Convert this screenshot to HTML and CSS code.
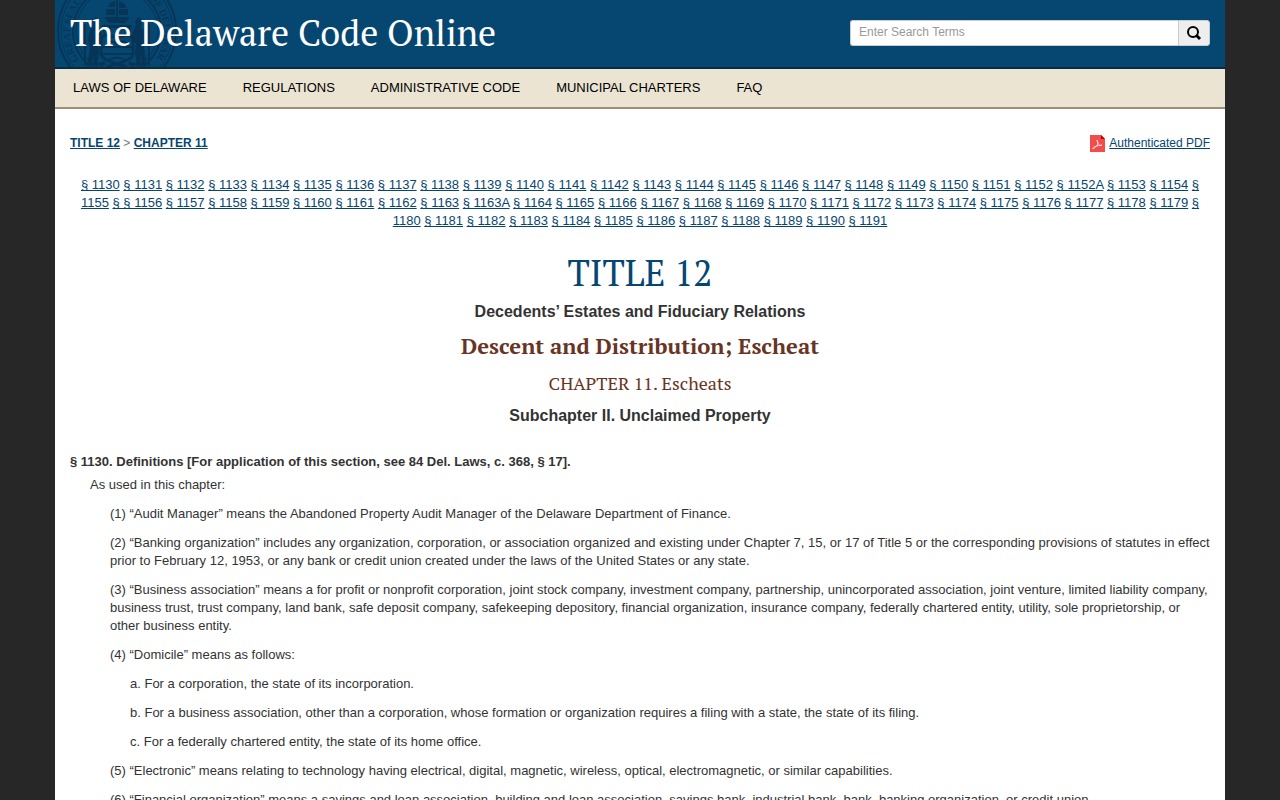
FILE: index.html
```
<!DOCTYPE html>
<html lang="en">
<head>
    <meta charset="UTF-8">
    <meta name="viewport" content="width=device-width, initial-scale=1.0">
    <title>Title 12 - CHAPTER 11. Escheats</title>
    <link rel="stylesheet" href="styles.css">
</head>
<body>
    <div class="container">
        <!-- Header -->
        <header class="header">
            <svg class="seal" viewBox="0 0 122 67" aria-hidden="true">
                <g fill="none" stroke="currentColor">
                    <circle cx="61" cy="31" r="59" stroke-width="2"/>
                    <circle cx="61" cy="31" r="56" stroke-width="1"/>
                    <circle cx="61" cy="31" r="44" stroke-width="2"/>
                    <circle cx="61" cy="31" r="41" stroke-width="1"/>
                    <path id="sealRing" d="M23 60A47 47 0 1 1 99 60" stroke="none"/>
                    <path d="M45 41c0-8 8-6 16-3 8-3 16-5 16 3v12c0 6-8 8-16 11-8-3-16-5-16-11z" stroke-width="3"/>
                    <path d="M46 47h30M46 54h30M51 44c3-4 7-3 10 0 3-3 7-4 10 0M52 36c-7-4-4-11 3-8M70 36c7-4 4-11-3-8M53 60c3-3 13-3 16 0" stroke-width="2"/>
                    <path d="M49 62c-6 4-12 0-15 3M73 62c6 4 12 0 15 3M44 31l-5-4M78 31l5-4" stroke-width="2"/>
                    <path d="M51 67c6-3 14-3 20 0M44 66l5-3M78 66l-5-3" stroke-width="3"/>
                </g>
                <g fill="currentColor">
                    <path d="M48 17h26l-5 6H53zM60 0h2v17h-2zM54 3l5-2v6h-7zM63 1l6 3 1 4h-7zM50 9h9v6h-9zM63 9h9v6h-9z"/>
                    <path d="M46 25h30v3H46z"/>
                    <path d="M36 19l4-2 3 4-1 4 4 8-1 9-3 1 1 10-2 13h-4l1-12-3 12h-4l3-18-2-9 2-9 3-3z"/>
                    <path d="M86 19l-4-2-3 4 1 4-4 8 1 9 3 1-1 10 2 13h4l-1-12 3 12h4l-3-18 2-9-2-9-3-3z"/>
                    <path d="M28 24h2v42h-2zM92 24h2v42h-2z"/>
                </g>
                <text class="seal-text"><textPath href="#sealRing">GREAT SEAL OF THE STATE OF DELAWARE</textPath></text>
            </svg>
            <div class="site-title">The Delaware Code Online</div>
            <form class="search" role="search">
                <input type="text" name="q" aria-label="Search" placeholder="Enter Search Terms">
                <button type="submit" aria-label="Search">
                    <svg viewBox="0 0 16 16" aria-hidden="true">
                        <circle cx="7" cy="7" r="5" fill="none" stroke="currentColor" stroke-width="2"/>
                        <path d="M10 10l4 4" stroke="currentColor" stroke-width="3"/>
                    </svg>
                </button>
            </form>
        </header>

        <!-- Navigation -->
        <nav class="nav">
            <a href="#">LAWS OF DELAWARE</a>
            <a href="#">REGULATIONS</a>
            <a href="#">ADMINISTRATIVE CODE</a>
            <a href="#">MUNICIPAL CHARTERS</a>
            <a href="#">FAQ</a>
        </nav>

        <main class="content">
            <div class="top-row">
                <div class="breadcrumb"><a href="#">TITLE 12</a> &gt; <a href="#">CHAPTER 11</a></div>
                <a class="pdf-link" href="#">
                    <svg viewBox="0 0 15 17" aria-hidden="true">
                        <path d="M0 0h11l4 4v13H0z" fill="#f44b4b"/>
                        <path d="M11 0l4 4h-4z" fill="#b40000"/>
                        <path d="M7 5c2 3 1 5-4 9-1-2 3-3 9-4-1 2-5-1-5-5z" fill="none" stroke="#ffdede"/>
                    </svg>
                    <span>Authenticated PDF</span>
                </a>
            </div>

            <!-- Section index -->
            <div class="section-index">
                <a href="#1130">§ 1130</a>
                <a href="#">§ 1131</a>
                <a href="#">§ 1132</a>
                <a href="#">§ 1133</a>
                <a href="#">§ 1134</a>
                <a href="#">§ 1135</a>
                <a href="#">§ 1136</a>
                <a href="#">§ 1137</a>
                <a href="#">§ 1138</a>
                <a href="#">§ 1139</a>
                <a href="#">§ 1140</a>
                <a href="#">§ 1141</a>
                <a href="#">§ 1142</a>
                <a href="#">§ 1143</a>
                <a href="#">§ 1144</a>
                <a href="#">§ 1145</a>
                <a href="#">§ 1146</a>
                <a href="#">§ 1147</a>
                <a href="#">§ 1148</a>
                <a href="#">§ 1149</a>
                <a href="#">§ 1150</a>
                <a href="#">§ 1151</a>
                <a href="#">§ 1152</a>
                <a href="#">§ 1152A</a>
                <a href="#">§ 1153</a>
                <a href="#">§ 1154</a>
                <a href="#">§ 1155</a>
                <a href="#">§ § 1156</a>
                <a href="#">§ 1157</a>
                <a href="#">§ 1158</a>
                <a href="#">§ 1159</a>
                <a href="#">§ 1160</a>
                <a href="#">§ 1161</a>
                <a href="#">§ 1162</a>
                <a href="#">§ 1163</a>
                <a href="#">§ 1163A</a>
                <a href="#">§ 1164</a>
                <a href="#">§ 1165</a>
                <a href="#">§ 1166</a>
                <a href="#">§ 1167</a>
                <a href="#">§ 1168</a>
                <a href="#">§ 1169</a>
                <a href="#">§ 1170</a>
                <a href="#">§ 1171</a>
                <a href="#">§ 1172</a>
                <a href="#">§ 1173</a>
                <a href="#">§ 1174</a>
                <a href="#">§ 1175</a>
                <a href="#">§ 1176</a>
                <a href="#">§ 1177</a>
                <a href="#">§ 1178</a>
                <a href="#">§ 1179</a>
                <a href="#">§ 1180</a>
                <a href="#">§ 1181</a>
                <a href="#">§ 1182</a>
                <a href="#">§ 1183</a>
                <a href="#">§ 1184</a>
                <a href="#">§ 1185</a>
                <a href="#">§ 1186</a>
                <a href="#">§ 1187</a>
                <a href="#">§ 1188</a>
                <a href="#">§ 1189</a>
                <a href="#">§ 1190</a>
                <a href="#">§ 1191</a>
            </div>

            <!-- Headings -->
            <div class="title-head">
                <h1>TITLE 12</h1>
                <h4>Decedents’ Estates and Fiduciary Relations</h4>
                <h2>Descent and Distribution; Escheat</h2>
                <h3>CHAPTER 11. Escheats</h3>
                <h4>Subchapter II. Unclaimed Property</h4>
            </div>

            <!-- Code text -->
            <div class="section" id="1130">
                <div class="section-head">§ 1130. Definitions [For application of this section, see 84 Del. Laws, c. 368, § 17].</div>
                <p class="indent-1">As used in this chapter:</p>
                <p class="indent-2">(1) “Audit Manager” means the Abandoned Property Audit Manager of the Delaware Department of Finance.</p>
                <p class="indent-2">(2) “Banking organization” includes any organization, corporation, or association organized and existing under Chapter 7, 15, or 17 of Title 5 or the corresponding provisions of statutes in effect prior to February 12, 1953, or any bank or credit union created under the laws of the United States or any state.</p>
                <p class="indent-2">(3) “Business association” means a for profit or nonprofit corporation, joint stock company, investment company, partnership, unincorporated association, joint venture, limited liability company, business trust, trust company, land bank, safe deposit company, safekeeping depository, financial organization, insurance company, federally chartered entity, utility, sole proprietorship, or other business entity.</p>
                <p class="indent-2">(4) “Domicile” means as follows:</p>
                <p class="indent-3">a. For a corporation, the state of its incorporation.</p>
                <p class="indent-3">b. For a business association, other than a corporation, whose formation or organization requires a filing with a state, the state of its filing.</p>
                <p class="indent-3">c. For a federally chartered entity, the state of its home office.</p>
                <p class="indent-2">(5) “Electronic” means relating to technology having electrical, digital, magnetic, wireless, optical, electromagnetic, or similar capabilities.</p>
                <p class="indent-2">(6) “Financial organization” means a savings and loan association, building and loan association, savings bank, industrial bank, bank, banking organization, or credit union.</p>
            </div>
        </main>
    </div>
</body>
</html>
```

FILE: styles.css
```
* {
    box-sizing: border-box;
}
body {
    margin: 0;
    background-color: #272727;
    color: #333;
    font-family: "Liberation Sans", Arial, sans-serif;
    font-size: 13px;
    line-height: 18px;
}
a {
    color: #064570;
    text-decoration: underline;
}
.container {
    max-width: 1170px;
    margin: 0 auto;
    background-color: #fff;
}

/* Header */
.header {
    position: relative;
    display: flex;
    justify-content: space-between;
    align-items: center;
    height: 69px;
    padding: 0 15px 2px;
    background-color: #064772;
    border-bottom: 2px solid #082c44;
}
.seal {
    position: absolute;
    left: 1px;
    top: 0;
    width: 122px;
    height: 67px;
    color: #063558;
}
.seal-text {
    font-family: "Liberation Serif", serif;
    font-size: 10px;
    font-weight: bold;
    fill: currentColor;
}
.site-title {
    position: relative;
    color: #fff;
    font-family: "PT Serif", "Liberation Serif", serif;
    font-size: 36px;
    line-height: 46px;
}
.search {
    display: flex;
    width: 360px;
    height: 26px;
}
.search input {
    flex: 1;
    min-width: 0;
    padding: 0 8px 2px;
    border: 1px solid #ccc;
    border-right: none;
    border-radius: 3px 0 0 3px;
    font-family: inherit;
    font-size: 12px;
}
.search input::placeholder {
    color: #999;
}
.search button {
    width: 32px;
    padding: 0;
    border: 1px solid #ccc;
    border-radius: 0 3px 3px 0;
    background-color: #eee;
    color: #000;
    cursor: pointer;
}
.search svg {
    display: block;
    width: 16px;
    height: 16px;
    margin: 0 auto;
}

/* Navigation */
.nav {
    display: flex;
    flex-wrap: wrap;
    background-color: #ebe4d2;
    border-bottom: 2px solid #a08c78;
}
.nav a {
    padding: 10px 18px;
    color: #000;
    text-decoration: none;
}

.content {
    padding: 25px 15px;
}
.top-row {
    display: flex;
    justify-content: space-between;
    margin-bottom: 24px;
    font-size: 12px;
}
.breadcrumb {
    color: #777;
}
.breadcrumb a {
    font-weight: bold;
}
.pdf-link {
    display: flex;
    align-items: center;
    gap: 4px;
    text-decoration: none;
}
.pdf-link span {
    text-decoration: underline;
}
.pdf-link svg {
    width: 15px;
    height: 17px;
}
.section-index {
    text-align: center;
}

/* Headings */
.title-head {
    margin: 20px 0 28px;
    text-align: center;
}
.title-head h1,
.title-head h2,
.title-head h3 {
    font-family: "PT Serif", "Liberation Serif", serif;
    color: #683424;
}
.title-head h1 {
    margin: 0;
    color: #064772;
    font-size: 36px;
    font-weight: normal;
    line-height: 46px;
}
.title-head h2 {
    margin: 12px 0;
    font-size: 22px;
    line-height: 26px;
}
.title-head h3 {
    margin: 12px 0;
    font-size: 18px;
    font-weight: normal;
    line-height: 24px;
}
.title-head h4 {
    margin: 7px 0;
    font-size: 16px;
    line-height: 18px;
}

/* Code text */
.section-head {
    margin-bottom: 5px;
    font-weight: bold;
}
.section p {
    margin: 0 0 11px;
}
.section .indent-1 {
    margin-left: 20px;
}
.section .indent-2 {
    margin-left: 40px;
}
.section .indent-3 {
    margin-left: 60px;
}
```
